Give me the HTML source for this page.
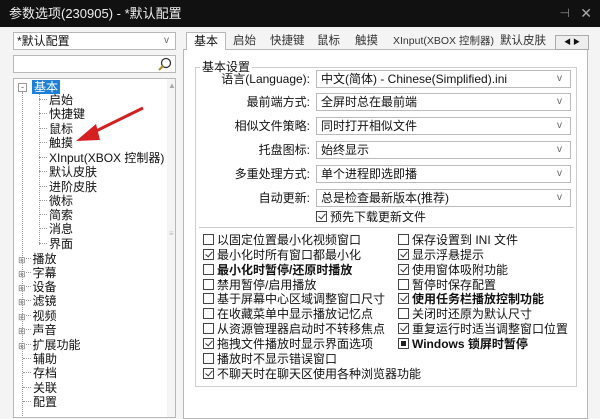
<!DOCTYPE html><html><head><meta charset="utf-8"><style>
*{margin:0;padding:0;box-sizing:border-box}
body{width:600px;height:413px;overflow:hidden;background:#f4f4f4;font-family:"Liberation Sans","Noto Sans CJK SC",sans-serif;font-size:12px;color:#111;position:relative}
div{white-space:nowrap}
.a{position:absolute}
.title{left:0;top:0;width:600px;height:27px;background:#111;color:#eee;font-size:13px;line-height:27px;padding-left:9px}
.box{position:absolute;background:#fff;border:1px solid #b8b8b8}
.dd{position:absolute;left:316px;width:255px;height:18px;background:#fff;border:1px solid #bbb;line-height:16px;padding-left:4px;font-size:12px}
.dd:after{content:"v";position:absolute;right:8px;top:0;color:#666;font-size:10px}
.lbl{position:absolute;right:290px;text-align:right;line-height:18px}
.cb{display:inline-block;width:11px;height:11px;border:1px solid #444;vertical-align:-1px;margin-right:3px;position:relative;background:#fff}
.ck:after{content:"";position:absolute;left:3px;top:0px;width:3px;height:6px;border:solid #333;border-width:0 1px 1px 0;transform:rotate(40deg)}
.fill:after{content:"";position:absolute;left:2px;top:2px;width:5px;height:5px;background:#222}
.tr{position:absolute;left:25px;line-height:14px}
.tp{position:absolute;line-height:14px}
.row{position:absolute;left:0;line-height:14px}
.tab{position:absolute;top:34px;line-height:14px;color:#333;font-size:11.5px}
.dash{display:inline-block;width:8px;border-top:1px dotted #999;vertical-align:4px;margin-right:2px}
b{font-weight:bold}
</style></head><body>
<div class="a title">参数选项(230905) - *默认配置</div>
<div class="a" style="right:30px;top:6px;color:#888;font-size:12px">⊣</div>
<div class="a" style="right:8px;top:5px;color:#aaa;font-size:14px">✕</div>

<div class="box" style="left:13px;top:32px;width:163px;height:18px;line-height:16px;padding-left:3px">*默认配置<span style="position:absolute;right:6px;color:#666;font-size:10px">v</span></div>
<div class="box" style="left:13px;top:55px;width:163px;height:18px"><svg style="position:absolute;right:2px;top:0" width="16" height="16"><circle cx="9" cy="7" r="4.5" fill="none" stroke="#333" stroke-width="1.3"/><line x1="6" y1="10" x2="2" y2="14" stroke="#b08a20" stroke-width="2"/></svg></div>
<div class="box" style="left:13px;top:78px;width:163px;height:340px;overflow:hidden">
<div class="a" style="left:153px;top:0;width:9px;height:340px;background:#f4f4f4"></div>
<div class="a" style="left:154px;top:2px;color:#aaa;font-size:8px">▲</div>
<div class="a" style="left:155px;top:150px;color:#bbb;font-size:8px">≡</div>
<div class="a" style="left:8px;top:13px;width:0;height:330px;border-left:1px dotted #999"></div>
<div class="a" style="left:25px;top:14px;width:0;height:152px;border-left:1px dotted #999"></div>
<div class="a" style="left:4px;top:4px;width:9px;height:9px;border:1px solid #999;background:#fff;font-size:9px;line-height:7px;text-align:center;color:#555">-</div>
<div class="a" style="left:18px;top:1px;background:#1e7fd8;color:#fff;padding:0 2px;line-height:14px">基本</div>
<div class="tr" style="top:14px"><span class="dash"></span>启始</div><div class="tr" style="top:28px"><span class="dash"></span>快捷键</div><div class="tr" style="top:43px"><span class="dash"></span>鼠标</div><div class="tr" style="top:57px"><span class="dash"></span>触摸</div><div class="tr" style="top:72px"><span class="dash"></span>XInput(XBOX 控制器)</div><div class="tr" style="top:86px"><span class="dash"></span>默认皮肤</div><div class="tr" style="top:101px"><span class="dash"></span>进阶皮肤</div><div class="tr" style="top:115px"><span class="dash"></span>微标</div><div class="tr" style="top:129px"><span class="dash"></span>简索</div><div class="tr" style="top:143px"><span class="dash"></span>消息</div><div class="tr" style="top:158px"><span class="dash"></span>界面</div>
<div class="tp" style="left:4px;top:173px"><span style="font-size:9px;color:#777">⊞</span><span class="dash" style="width:5px"></span>播放</div>
<div class="tp" style="left:4px;top:187px"><span style="font-size:9px;color:#777">⊞</span><span class="dash" style="width:5px"></span>字幕</div>
<div class="tp" style="left:4px;top:201px"><span style="font-size:9px;color:#777">⊞</span><span class="dash" style="width:5px"></span>设备</div>
<div class="tp" style="left:4px;top:215px"><span style="font-size:9px;color:#777">⊞</span><span class="dash" style="width:5px"></span>滤镜</div>
<div class="tp" style="left:4px;top:230px"><span style="font-size:9px;color:#777">⊞</span><span class="dash" style="width:5px"></span>视频</div>
<div class="tp" style="left:4px;top:244px"><span style="font-size:9px;color:#777">⊞</span><span class="dash" style="width:5px"></span>声音</div>
<div class="tp" style="left:4px;top:259px"><span style="font-size:9px;color:#777">⊞</span><span class="dash" style="width:5px"></span>扩展功能</div>
<div class="tp" style="left:9px;top:273px"><span class="dash"></span>辅助</div><div class="tp" style="left:9px;top:287px"><span class="dash"></span>存档</div><div class="tp" style="left:9px;top:302px"><span class="dash"></span>关联</div><div class="tp" style="left:9px;top:316px"><span class="dash"></span>配置</div>
</div>
<svg class="a" style="left:0;top:0" width="200" height="200"><line x1="143" y1="108" x2="92" y2="133" stroke="#d42020" stroke-width="3"/><polygon points="76,141 96,124 100,140" fill="#d42020"/></svg>

<div class="box" style="left:183px;top:49px;width:405px;height:370px"></div>
<div class="a" style="left:186px;top:32px;width:40px;height:18px;background:#fff;border:1px solid #b8b8b8;border-bottom:none;line-height:17px;text-align:center">基本</div>
<div class="tab" style="left:233px">启始</div>
<div class="tab" style="left:270px">快捷键</div>
<div class="tab" style="left:317px">鼠标</div>
<div class="tab" style="left:355px">触摸</div>
<div class="tab" style="left:393px;font-size:10.5px">XInput(XBOX 控制器)</div>
<div class="tab" style="left:500px">默认皮肤</div>
<div class="a" style="left:555px;top:35px;width:34px;height:15px;background:#eee;border:1px solid #aaa;font-size:7px;line-height:13px;text-align:center">◀ ▶</div>

<div class="a" style="left:195px;top:67px;width:382px;height:320px;border:1px solid #d0d0d0"></div>
<div class="a" style="left:200px;top:60px;background:#fff;padding:0 2px;line-height:14px">基本设置</div>
<div class="lbl" style="top:70px">语言(Language):</div><div class="dd" style="top:70px">中文(简体) - Chinese(Simplified).ini</div>
<div class="lbl" style="top:93px">最前端方式:</div><div class="dd" style="top:93px">全屏时总在最前端</div>
<div class="lbl" style="top:117px">相似文件策略:</div><div class="dd" style="top:117px">同时打开相似文件</div>
<div class="lbl" style="top:141px">托盘图标:</div><div class="dd" style="top:141px">始终显示</div>
<div class="lbl" style="top:165px">多重处理方式:</div><div class="dd" style="top:165px">单个进程即选即播</div>
<div class="lbl" style="top:189px">自动更新:</div><div class="dd" style="top:189px">总是检查最新版本(推荐)</div>
<div class="row" style="left:316px;top:210px"><span class="cb ck"></span>预先下载更新文件</div>
<div class="a" style="left:199px;top:227px;width:375px;border-top:1px solid #ccc"></div>

<div style="position:absolute;left:203px;top:233px;width:190px">
<div class="row" style="top:0"><span class="cb"></span>以固定位置最小化视频窗口</div>
<div class="row" style="top:15px"><span class="cb ck"></span>最小化时所有窗口都最小化</div>
<div class="row" style="top:30px"><span class="cb"></span><b>最小化时暂停/还原时播放</b></div>
<div class="row" style="top:45px"><span class="cb"></span>禁用暂停/启用播放</div>
<div class="row" style="top:59px"><span class="cb"></span>基于屏幕中心区域调整窗口尺寸</div>
<div class="row" style="top:74px"><span class="cb"></span>在收藏菜单中显示播放记忆点</div>
<div class="row" style="top:89px"><span class="cb"></span>从资源管理器启动时不转移焦点</div>
<div class="row" style="top:104px"><span class="cb ck"></span>拖拽文件播放时显示界面选项</div>
<div class="row" style="top:119px"><span class="cb"></span>播放时不显示错误窗口</div>
<div class="row" style="top:134px"><span class="cb ck"></span>不聊天时在聊天区使用各种浏览器功能</div>
</div>
<div style="position:absolute;left:398px;top:233px;width:180px">
<div class="row" style="top:0"><span class="cb"></span>保存设置到 INI 文件</div>
<div class="row" style="top:15px"><span class="cb ck"></span>显示浮悬提示</div>
<div class="row" style="top:30px"><span class="cb ck"></span>使用窗体吸附功能</div>
<div class="row" style="top:45px"><span class="cb"></span>暂停时保存配置</div>
<div class="row" style="top:59px"><span class="cb ck"></span><b>使用任务栏播放控制功能</b></div>
<div class="row" style="top:74px"><span class="cb"></span>关闭时还原为默认尺寸</div>
<div class="row" style="top:89px"><span class="cb ck"></span>重复运行时适当调整窗口位置</div>
<div class="row" style="top:104px"><span class="cb fill"></span><b>Windows 锁屏时暂停</b></div>
</div>
</body></html>
